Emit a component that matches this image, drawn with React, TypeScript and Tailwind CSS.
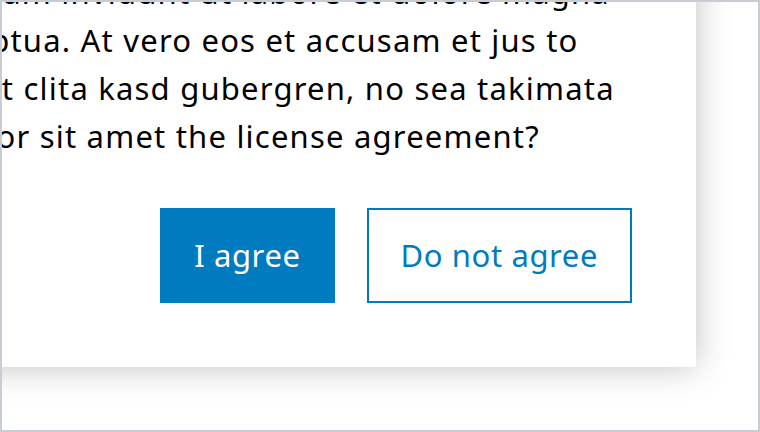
const lines = [
  "nonumy sed diam invidunt ut labore et dolore magna",
  "sed diam voluptua. At vero eos et accusam et jus to",
  "tea rebum. Stet clita kasd gubergren, no sea takimata",
  "rest ipsum dolor sit amet the license agreement?",
];

export default function App() {
  return (
    <div className="w-[760px] h-[432px] border-2 border-[#c8ccd4] overflow-hidden bg-white font-['Noto_Sans',sans-serif]">
      <div className="-mt-[34px] -ml-[294px] w-[988px] bg-white pl-16 pr-16 pb-16 shadow-[0_0_32px_rgba(0,0,0,0.25)]">
        <div className="text-[31px] leading-[48px] tracking-[1.2px] text-black whitespace-nowrap">
          {lines.map((line) => (
            <div key={line}>{line}</div>
          ))}
        </div>
        <div className="mt-12 flex justify-end gap-8">
          <button className="border-2 border-[#007bc0] bg-[#007bc0] px-8 py-[21px] text-[31px] leading-[49px] tracking-[0.6px] text-white">
            I agree
          </button>
          <button className="border-2 border-[#007bc0] bg-white px-8 py-[21px] text-[31px] leading-[49px] tracking-[0.6px] text-[#007bc0]">
            Do not agree
          </button>
        </div>
      </div>
    </div>
  );
}
